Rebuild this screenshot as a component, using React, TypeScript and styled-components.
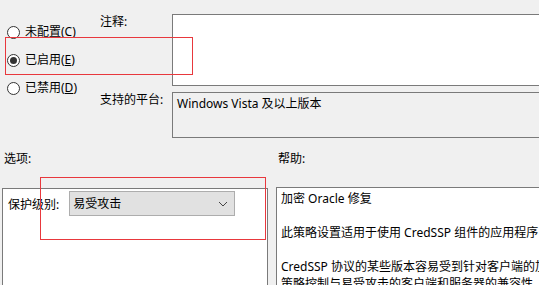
import React from "react";
import styled, { createGlobalStyle } from "styled-components";

const GlobalStyle = createGlobalStyle`
  html, body {
    margin: 0;
    padding: 0;
    background: #f0f0f0;
  }
  body {
    font-family: "Noto Sans", "Noto Sans CJK SC", sans-serif;
    font-size: 12px;
    color: #000;
  }
`;

const Page = styled("div")`
  position: relative;
  width: 539px;
  height: 285px;
  overflow: hidden;
  background: #f0f0f0;
`;

const TopSection = styled("div")`
  display: flex;
  padding-top: 14px;
`;

const RadioGroup = styled("div")`
  display: flex;
  flex-direction: column;
  flex-shrink: 0;
  box-sizing: border-box;
  width: 100px;
  padding-left: 7px;
  padding-top: 4px;
`;

const RadioRow = styled("label")`
  display: flex;
  align-items: center;
  gap: 5px;
  height: 28px;
  line-height: 16px;
  white-space: nowrap;
`;

const RadioCircle = styled("span")<{ checked?: boolean }>`
  box-sizing: border-box;
  width: 13px;
  height: 13px;
  border-radius: 50%;
  border: 1px solid #333;
  background: #fff;
  display: flex;
  align-items: center;
  justify-content: center;
  flex-shrink: 0;

  &::after {
    content: "";
    width: 7px;
    height: 7px;
    border-radius: 50%;
    background: #333;
    display: ${(props) => (props.checked ? "block" : "none")};
  }
`;

const FieldGrid = styled("div")`
  display: grid;
  flex-shrink: 0;
  grid-template-columns: 72px 420px;
  grid-template-rows: 72px 46px;
  row-gap: 6px;
`;

const FieldLabel = styled("div")`
  line-height: 16px;
  white-space: nowrap;
`;

const TextBox = styled("div")<{ readOnly?: boolean }>`
  box-sizing: border-box;
  border: 1px solid #7a7a7a;
  background: ${(props) => (props.readOnly ? "#f0f0f0" : "#fff")};
  padding: 3px 4px;
  line-height: 16px;
  white-space: nowrap;
`;

const BottomSection = styled("div")`
  display: grid;
  grid-template-columns: 266px 300px;
  column-gap: 8px;
  padding-left: 2px;
  margin-top: 13px;
`;

const SectionLabel = styled("div")`
  line-height: 16px;
  padding-left: 2px;
  height: 36px;
`;

const OptionsPanel = styled("div")`
  box-sizing: border-box;
  border: 1px solid #7a7a7a;
  background: #fff;
  height: 120px;
  margin-top: 1px;
  padding: 2px 0 0 5px;
`;

const OptionRow = styled("div")`
  display: flex;
  align-items: center;
  gap: 10px;
`;

const DropDown = styled("div")`
  box-sizing: border-box;
  width: 166px;
  height: 25px;
  background: #e1e1e1;
  border: 1px solid #adadad;
  display: flex;
  align-items: center;
  justify-content: space-between;
  padding: 0 6px 0 3px;
  line-height: 16px;
`;

const HelpPanel = styled("div")`
  box-sizing: border-box;
  border: 1px solid #7a7a7a;
  background: #fff;
  height: 120px;
  padding: 2px 0 0 4px;
  white-space: nowrap;
  overflow: hidden;
`;

const HelpLine = styled("div")`
  line-height: 17px;
  min-height: 17px;
`;

const Annotation = styled("div")`
  position: absolute;
  box-sizing: border-box;
  border: 1px solid #e8383d;
  pointer-events: none;
`;

function Chevron() {
  return (
    <svg width="10" height="6" viewBox="0 0 10 6">
      <polyline
        points="1,1 5,5 9,1"
        fill="none"
        stroke="#444"
        strokeWidth="1"
      />
    </svg>
  );
}

export default function App() {
  return (
    <Page>
      <GlobalStyle />
      <TopSection>
        <RadioGroup>
          <RadioRow>
            <RadioCircle />
            <span>
              未配置(<u>C</u>)
            </span>
          </RadioRow>
          <RadioRow>
            <RadioCircle checked />
            <span>
              已启用(<u>E</u>)
            </span>
          </RadioRow>
          <RadioRow>
            <RadioCircle />
            <span>
              已禁用(<u>D</u>)
            </span>
          </RadioRow>
        </RadioGroup>
        <FieldGrid>
          <FieldLabel>注释:</FieldLabel>
          <TextBox />
          <FieldLabel>支持的平台:</FieldLabel>
          <TextBox readOnly>Windows Vista 及以上版本</TextBox>
        </FieldGrid>
      </TopSection>
      <BottomSection>
        <div>
          <SectionLabel>选项:</SectionLabel>
          <OptionsPanel>
            <OptionRow>
              <span>保护级别:</span>
              <DropDown>
                <span>易受攻击</span>
                <Chevron />
              </DropDown>
            </OptionRow>
          </OptionsPanel>
        </div>
        <div>
          <SectionLabel>帮助:</SectionLabel>
          <HelpPanel>
            <HelpLine>加密 Oracle 修复</HelpLine>
            <HelpLine />
            <HelpLine>此策略设置适用于使用 CredSSP 组件的应用程序</HelpLine>
            <HelpLine />
            <HelpLine>CredSSP 协议的某些版本容易受到针对客户端的加密</HelpLine>
            <HelpLine>策略控制与易受攻击的客户端和服务器的兼容性</HelpLine>
          </HelpPanel>
        </div>
      </BottomSection>
      <Annotation style={{ left: 5, top: 37, width: 188, height: 38 }} />
      <Annotation style={{ left: 40, top: 177, width: 226, height: 63 }} />
    </Page>
  );
}
